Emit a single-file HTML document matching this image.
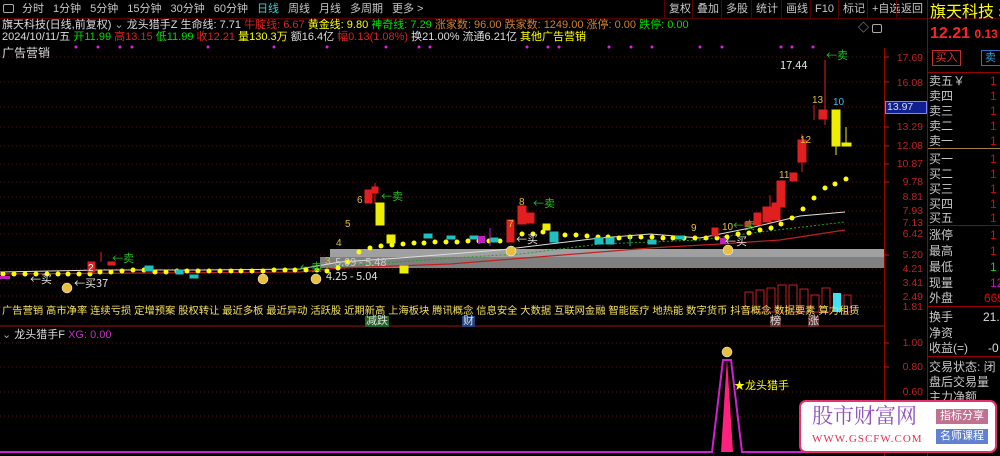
<!DOCTYPE html>
<html><head><meta charset="utf-8"><style>
*{margin:0;padding:0;box-sizing:border-box}
body{width:1000px;height:456px;background:#000;overflow:hidden;position:relative;font-family:"Liberation Sans","Noto Sans CJK SC",sans-serif;font-size:11px;color:#c8c8c8}
.a{position:absolute;white-space:nowrap;line-height:1}
.tb span{margin-right:9px}
.btn{position:absolute;top:0;height:18px;line-height:18px;font-size:11px;color:#c8c8c8;border-left:1px solid #5a0000;padding:0 4px}
.ax{position:absolute;left:885px;width:38px;text-align:right;color:#c02020;font-size:10.5px;line-height:1}
.rp{position:absolute;left:929px;font-size:12px;color:#c8c8c8;line-height:1}
.rv{position:absolute;left:990px;font-size:12px;color:#e00;line-height:1}
</style></head><body>
<div class="a" style="left:0;top:0;width:1000px;height:19px;background:#000;border-bottom:1px solid #500"></div>
<div class="a" style="left:3px;top:4px;width:11px;height:9px;border:1px solid #aaa;border-radius:2px"></div>
<div class="a tb" style="left:22px;top:4px;font-size:11px;color:#c8c8c8"><span>分时</span><span>1分钟</span><span>5分钟</span><span>15分钟</span><span>30分钟</span><span>60分钟</span><span style="color:#4cc">日线</span><span>周线</span><span>月线</span><span>多周期</span><span>更多 &gt;</span></div>
<div class="btn" style="left:664px">复权</div><div class="btn" style="left:692px">叠加</div><div class="btn" style="left:721px">多股</div><div class="btn" style="left:751px">统计</div><div class="btn" style="left:781px">画线</div><div class="btn" style="left:810px">F10</div><div class="btn" style="left:838px">标记</div><div class="btn" style="left:867px">+自选</div><div class="btn" style="left:896px">返回</div>
<div class="a" style="left:927px;top:0;width:1px;height:456px;background:#900"></div>
<div class="a" style="left:930px;top:5px;font-size:16px;color:#ff0">旗天科技 <span style="font-size:13px;color:#ddd">30</span></div>
<div class="a" style="left:930px;top:26px;font-size:16px;color:#f22;font-weight:bold">12.21 <span style="font-size:12px">0.13</span></div>
<div class="a" style="left:932px;top:50px;width:29px;height:16px;border:1px solid #c03030;color:#e03030;font-size:11px;text-align:center;line-height:14px">买入</div>
<div class="a" style="left:981px;top:50px;width:25px;height:16px;border:1px solid #3070c0;color:#30a0e0;font-size:11px;padding-left:3px;line-height:14px">卖</div>
<div class="a" style="left:928px;top:72px;width:72px;height:1px;background:#900"></div>
<div class="rp" style="top:75px">卖五￥</div><div class="rp" style="top:90px">卖四</div><div class="rp" style="top:105px">卖三</div><div class="rp" style="top:120px">卖二</div><div class="rp" style="top:135px">卖一</div>
<div class="rv" style="top:75px">1</div><div class="rv" style="top:90px">1</div><div class="rv" style="top:105px">1</div><div class="rv" style="top:120px">1</div><div class="rv" style="top:135px">1</div>
<div class="a" style="left:928px;top:148px;width:72px;height:1px;background:#a08040"></div>
<div class="rp" style="top:153px">买一</div><div class="rp" style="top:168px">买二</div><div class="rp" style="top:183px">买三</div><div class="rp" style="top:198px">买四</div><div class="rp" style="top:212px">买五</div>
<div class="rv" style="top:153px">1</div><div class="rv" style="top:168px">1</div><div class="rv" style="top:183px">1</div><div class="rv" style="top:198px">1</div><div class="rv" style="top:212px">1</div>
<div class="a" style="left:928px;top:225px;width:72px;height:1px;background:#900"></div>
<div class="rp" style="top:229px">涨停</div><div class="rp" style="top:245px">最高</div><div class="rp" style="top:261px">最低</div><div class="rp" style="top:277px">现量</div><div class="rp" style="top:292px">外盘</div>
<div class="rv" style="top:229px">1</div><div class="rv" style="top:245px">1</div><div class="rv" style="top:261px;color:#0d0">1</div><div class="rv" style="top:277px;color:#d0d">12</div><div class="rv" style="top:292px;left:984px">669</div>
<div class="a" style="left:928px;top:306px;width:72px;height:1px;background:#900"></div>
<div class="rp" style="top:311px">换手</div><div class="rv" style="top:311px;left:983px;color:#ddd">21.</div>
<div class="rp" style="top:327px">净资</div>
<div class="rp" style="top:342px">收益(=)</div><div class="rv" style="top:342px;left:988px;color:#ddd">-0</div>
<div class="a" style="left:928px;top:356px;width:72px;height:1px;background:#900"></div>
<div class="rp" style="top:361px">交易状态: 闭</div><div class="rp" style="top:376px">盘后交易量</div><div class="rp" style="top:391px">主力净额</div>
<div class="a" style="left:2px;top:20px;font-size:11px"><span style="color:#ddd">旗天科技(日线,前复权)</span> <span style="color:#aaa">⌄</span> <span style="color:#ddd">龙头猎手Z 生命线: 7.71</span> <span style="color:#e02020">牛腚线: 6.67</span> <span style="color:#ff0">黄金线: 9.80</span> <span style="color:#0d0">神奇线: 7.29</span> <span style="color:#d08030">涨家数: 96.00</span> <span style="color:#d08030">跌家数: 1249.00</span> <span style="color:#d08030">涨停: 0.00</span> <span style="color:#0d0">跌停: 0.00</span></div>
<div class="a" style="left:2px;top:32px;font-size:11px;color:#ddd">2024/10/11/五 <span style="color:#0d0">开11.99</span> <span style="color:#e02020">高13.15</span> <span style="color:#0d0">低11.99</span> <span style="color:#e02020">收12.21</span> <span style="color:#ff0">量130.3万</span> 额16.4亿 <span style="color:#e02020">幅0.13(1.08%)</span> 换21.00% 流通6.21亿 <span style="color:#ff0">其他广告营销</span></div>
<div class="a" style="left:2px;top:47px;font-size:12px;color:#ddd">广告营销</div>
<div class="a" style="left:858px;top:23px;color:#aaa">◇</div>
<div class="a" style="left:872px;top:24px;width:10px;height:9px;border:1px solid #aaa;border-radius:2px"></div>
<div class="a" style="left:884px;top:48px;width:1px;height:408px;background:#900"></div>
<div class="ax" style="top:53px">17.69</div><div class="ax" style="top:78px">16.08</div>
<div class="a" style="left:885px;top:101px;width:42px;height:13px;background:#102090;border:1px solid #8080ff;color:#ddd;font-size:10.5px;padding-left:1px">13.97</div>
<div class="ax" style="top:122px">13.29</div><div class="ax" style="top:141px">12.08</div><div class="ax" style="top:159px">10.87</div><div class="ax" style="top:177px">9.78</div><div class="ax" style="top:192px">8.81</div><div class="ax" style="top:206px">7.93</div><div class="ax" style="top:218px">7.13</div><div class="ax" style="top:229px">6.42</div><div class="ax" style="top:250px">5.20</div><div class="ax" style="top:264px">4.21</div><div class="ax" style="top:278px">3.41</div><div class="ax" style="top:292px">2.49</div><div class="ax" style="top:302px">1.81</div>
<div class="ax" style="top:338px">1.00</div><div class="ax" style="top:362px">0.80</div><div class="ax" style="top:387px">0.60</div>
<svg class="a" style="left:0;top:0" width="927" height="456">
<g stroke="#501010" stroke-dasharray="1 3">
<line x1="0" y1="57" x2="884" y2="57"/><line x1="0" y1="82" x2="884" y2="82"/><line x1="0" y1="107" x2="884" y2="107"/><line x1="0" y1="127" x2="884" y2="127"/><line x1="0" y1="146" x2="884" y2="146"/><line x1="0" y1="164" x2="884" y2="164"/><line x1="0" y1="182" x2="884" y2="182"/><line x1="0" y1="197" x2="884" y2="197"/><line x1="0" y1="211" x2="884" y2="211"/><line x1="0" y1="224" x2="884" y2="224"/><line x1="0" y1="234" x2="884" y2="234"/><line x1="0" y1="255" x2="884" y2="255"/><line x1="0" y1="269" x2="884" y2="269"/><line x1="0" y1="283" x2="884" y2="283"/><line x1="0" y1="296" x2="884" y2="296"/><line x1="0" y1="307" x2="884" y2="307"/>
<line x1="0" y1="343" x2="884" y2="343"/><line x1="0" y1="367" x2="884" y2="367"/><line x1="0" y1="392" x2="884" y2="392"/><line x1="0" y1="416" x2="884" y2="416"/>
</g>
<g stroke="#c02020"><line x1="884" y1="57" x2="889" y2="57"/><line x1="884" y1="82" x2="889" y2="82"/><line x1="884" y1="127" x2="889" y2="127"/><line x1="884" y1="146" x2="889" y2="146"/><line x1="884" y1="164" x2="889" y2="164"/><line x1="884" y1="182" x2="889" y2="182"/><line x1="884" y1="255" x2="889" y2="255"/><line x1="884" y1="343" x2="889" y2="343"/><line x1="884" y1="367" x2="889" y2="367"/></g>
<g fill="#e020e0"><circle cx="76" cy="47" r="1.5"/><circle cx="98" cy="47" r="1.5"/><circle cx="120" cy="47" r="1.5"/><circle cx="132" cy="47" r="1.5"/><circle cx="208" cy="47" r="1.5"/><circle cx="274" cy="47" r="1.5"/><circle cx="327" cy="47" r="1.5"/><circle cx="386" cy="47" r="1.5"/><circle cx="419" cy="47" r="1.5"/><circle cx="430" cy="47" r="1.5"/><circle cx="527" cy="47" r="1.5"/><circle cx="548" cy="47" r="1.5"/><circle cx="559" cy="47" r="1.5"/><circle cx="609" cy="47" r="1.5"/><circle cx="631" cy="47" r="1.5"/><circle cx="652" cy="47" r="1.5"/><circle cx="700" cy="47" r="1.5"/><circle cx="722" cy="47" r="1.5"/><circle cx="781" cy="47" r="1.5"/><circle cx="792" cy="47" r="1.5"/><circle cx="813" cy="47" r="1.5"/></g>
<rect x="330" y="249" width="554" height="8" fill="#a0a0a0"/>
<rect x="320" y="257" width="564" height="11" fill="#808080"/>
<polyline points="0,272 100,270 200,270 300,269 340,262 400,258 500,250 600,238 650,234 700,238 750,228 800,216 845,212" fill="none" stroke="#ddd" stroke-width="1"/>
<polyline points="0,274 300,272 340,268 450,264 550,256 650,248 720,244 780,240 845,230" fill="none" stroke="#c02020" stroke-width="1.2"/>
<polyline points="320,268 450,258 520,254 600,244 700,240 760,232 845,222" fill="none" stroke="#20a020" stroke-dasharray="2 2"/>
<g fill="#ff0">
<circle cx="3" cy="274" r="2.5"/><circle cx="14" cy="274" r="2.5"/><circle cx="25" cy="274" r="2.5"/><circle cx="36" cy="274" r="2.5"/><circle cx="47" cy="274" r="2.5"/><circle cx="58" cy="274" r="2.5"/><circle cx="68" cy="274" r="2.5"/><circle cx="79" cy="274" r="2.5"/><circle cx="90" cy="274" r="2.5"/><circle cx="100" cy="272" r="2.5"/><circle cx="111" cy="272" r="2.5"/><circle cx="122" cy="271" r="2.5"/><circle cx="133" cy="270" r="2.5"/><circle cx="144" cy="270" r="2.5"/><circle cx="155" cy="272" r="2.5"/><circle cx="166" cy="272" r="2.5"/><circle cx="177" cy="271" r="2.5"/><circle cx="187" cy="271" r="2.5"/><circle cx="198" cy="271" r="2.5"/><circle cx="209" cy="271" r="2.5"/><circle cx="220" cy="271" r="2.5"/><circle cx="231" cy="271" r="2.5"/><circle cx="241" cy="271" r="2.5"/><circle cx="252" cy="271" r="2.5"/><circle cx="263" cy="271" r="2.5"/><circle cx="274" cy="270" r="2.5"/><circle cx="285" cy="270" r="2.5"/><circle cx="295" cy="270" r="2.5"/><circle cx="306" cy="270" r="2.5"/><circle cx="317" cy="270" r="2.5"/><circle cx="327" cy="271" r="2.5"/><circle cx="338" cy="268" r="2.5"/><circle cx="348" cy="262" r="2.5"/><circle cx="359" cy="252" r="2.5"/><circle cx="370" cy="248" r="2.5"/><circle cx="381" cy="246" r="2.5"/><circle cx="392" cy="245" r="2.5"/><circle cx="403" cy="244" r="2.5"/><circle cx="414" cy="243" r="2.5"/><circle cx="424" cy="243" r="2.5"/><circle cx="435" cy="242" r="2.5"/><circle cx="446" cy="242" r="2.5"/><circle cx="457" cy="242" r="2.5"/><circle cx="468" cy="241" r="2.5"/><circle cx="479" cy="241" r="2.5"/><circle cx="489" cy="241" r="2.5"/><circle cx="500" cy="241" r="2.5"/><circle cx="511" cy="239" r="2.5"/><circle cx="522" cy="234" r="2.5"/><circle cx="533" cy="234" r="2.5"/><circle cx="543" cy="232" r="2.5"/><circle cx="554" cy="235" r="2.5"/><circle cx="565" cy="235" r="2.5"/><circle cx="576" cy="235" r="2.5"/><circle cx="587" cy="236" r="2.5"/><circle cx="598" cy="237" r="2.5"/><circle cx="608" cy="237" r="2.5"/><circle cx="619" cy="238" r="2.5"/><circle cx="630" cy="237" r="2.5"/><circle cx="641" cy="237" r="2.5"/><circle cx="652" cy="237" r="2.5"/><circle cx="663" cy="238" r="2.5"/><circle cx="673" cy="238" r="2.5"/><circle cx="684" cy="238" r="2.5"/><circle cx="695" cy="238" r="2.5"/><circle cx="706" cy="238" r="2.5"/><circle cx="717" cy="238" r="2.5"/><circle cx="727" cy="237" r="2.5"/><circle cx="738" cy="234" r="2.5"/><circle cx="749" cy="233" r="2.5"/><circle cx="760" cy="230" r="2.5"/><circle cx="771" cy="228" r="2.5"/><circle cx="781" cy="224" r="2.5"/><circle cx="792" cy="218" r="2.5"/><circle cx="803" cy="209" r="2.5"/><circle cx="814" cy="198" r="2.5"/><circle cx="825" cy="188" r="2.5"/><circle cx="835" cy="184" r="2.5"/><circle cx="846" cy="179" r="2.5"/>
</g>
<g stroke="#e02020" fill="#e02020">
<rect x="88" y="262" width="7" height="10"/><line x1="101" y1="252" x2="101" y2="262"/><rect x="108" y="262" width="7" height="3"/>
<rect x="365" y="190" width="7" height="13"/><rect x="372" y="187" width="6" height="6"/><line x1="375" y1="183" x2="375" y2="204"/>
<rect x="507" y="220" width="7" height="22"/><rect x="518" y="206" width="8" height="18"/><rect x="527" y="213" width="7" height="10"/>
<rect x="712" y="228" width="6" height="8"/><rect x="745" y="222" width="6" height="4"/><rect x="754" y="213" width="7" height="12"/><rect x="763" y="207" width="8" height="15"/><rect x="772" y="203" width="8" height="17"/><line x1="770" y1="195" x2="770" y2="215"/><line x1="780" y1="188" x2="780" y2="213"/><rect x="777" y="181" width="8" height="26"/><rect x="790" y="173" width="7" height="8"/><rect x="798" y="140" width="8" height="22"/><line x1="802" y1="134" x2="802" y2="172"/><rect x="819" y="110" width="8" height="9"/><line x1="814" y1="105" x2="814" y2="120"/><line x1="825" y1="60" x2="825" y2="125"/>
</g>
<g fill="#ee0" stroke="#ee0">
<rect x="376" y="203" width="8" height="22"/><rect x="387" y="235" width="8" height="8"/><rect x="832" y="110" width="8" height="36"/><line x1="836" y1="146" x2="836" y2="155"/><rect x="842" y="143" width="9" height="3"/><line x1="846" y1="127" x2="846" y2="146"/><rect x="543" y="224" width="7" height="6"/><rect x="400" y="266" width="8" height="7"/>
</g>
<g fill="#20c0c0" stroke="#20c0c0">
<rect x="424" y="234" width="8" height="4"/><rect x="447" y="236" width="8" height="3"/><rect x="470" y="236" width="8" height="3"/><rect x="490" y="238" width="8" height="4"/><rect x="550" y="232" width="8" height="10"/><rect x="595" y="238" width="8" height="6"/><rect x="606" y="238" width="8" height="6"/><line x1="630" y1="236" x2="630" y2="246"/><rect x="648" y="240" width="8" height="4"/><rect x="676" y="236" width="8" height="3"/><rect x="145" y="266" width="8" height="5"/><rect x="176" y="270" width="7" height="4"/><rect x="190" y="275" width="8" height="3"/>
</g>
<g fill="#c020c0"><rect x="478" y="236" width="7" height="7"/><rect x="0" y="276" width="10" height="3"/><rect x="720" y="238" width="6" height="6"/><line x1="490" y1="228" x2="490" y2="246" stroke="#c020c0"/></g>
<g fill="none" stroke="#c02020"><rect x="745" y="292" width="8" height="20"/><rect x="756" y="290" width="8" height="22"/><rect x="767" y="288" width="8" height="24"/><rect x="778" y="285" width="8" height="27"/><rect x="789" y="285" width="8" height="27"/><rect x="800" y="289" width="8" height="23"/><rect x="811" y="295" width="8" height="17"/><rect x="822" y="288" width="8" height="24"/><rect x="844" y="295" width="7" height="17"/></g>
<rect x="833" y="293" width="8" height="19" fill="#40e0f0"/>
<g font-size="10" fill="#e0c040" font-family="Liberation Sans"><text x="88" y="271" fill="#fff">2</text><text x="336" y="246">4</text><text x="345" y="227">5</text><text x="357" y="203">6</text><text x="519" y="205">8</text><text x="508" y="227">7</text><text x="325" y="264">3</text><text x="691" y="231">9</text><text x="722" y="230">10</text><text x="779" y="178">11</text><text x="800" y="143">12</text><text x="812" y="103">13</text><text x="833" y="105" fill="#40c0e0">10</text></g>
<g font-size="11" fill="#20c020" font-family="Noto Sans CJK SC"><text x="112" y="262">←卖</text><text x="381" y="200">←卖</text><text x="533" y="207">←卖</text><text x="826" y="59">←卖</text><text x="300" y="271">←卖</text><text x="733" y="229">←卖</text></g>
<g font-size="11" fill="#e0e0e0" font-family="Noto Sans CJK SC"><text x="74" y="287">←买37</text><text x="30" y="283">←买</text><text x="326" y="280">4.25 - 5.04</text><text x="335" y="266" fill="#ccc">5.09 - 5.48</text><text x="516" y="243">←买</text><text x="780" y="69">17.44</text><text x="725" y="245">←买</text></g>
<g fill="#e8c040" stroke="#fff" stroke-width="0.5"><circle cx="67" cy="288" r="5"/><circle cx="263" cy="279" r="5"/><circle cx="316" cy="279" r="5"/><circle cx="511" cy="251" r="5"/><circle cx="728" cy="250" r="5"/><circle cx="727" cy="352" r="5"/></g>
<line x1="0" y1="326" x2="884" y2="326" stroke="#a01010"/>
<polyline points="0,452 712,452 723,360 731,360 742,452 884,452" fill="none" stroke="#d020d0" stroke-width="2"/>
<polygon points="721,452 727,358 733,452" fill="#ff2080"/>
</svg>
<div class="a" style="left:2px;top:307px;font-size:10.3px;color:#f0e060">广告营销 高市净率 连续亏损 定增预案 股权转让 最近多板 最近异动 活跃股 近期新高 上海板块 腾讯概念 信息安全 大数据 互联网金融 智能医疗 地热能 数字货币 抖音概念 数据要素 算力租赁</div>
<div class="a" style="left:365px;top:316px;font-size:11px;color:#e0e0e0;background:#206020;padding:0 1px">减跌</div>
<div class="a" style="left:462px;top:316px;font-size:11px;color:#e0e0e0;background:#204080;padding:0 1px">财</div>
<div class="a" style="left:770px;top:316px;font-size:11px;color:#ddd;background:#603030">榜</div>
<div class="a" style="left:808px;top:316px;font-size:11px;color:#ddd;background:#603030">涨</div>
<div class="a" style="left:2px;top:330px;font-size:11px;color:#ddd"><span style="color:#aaa">⌄</span> 龙头猎手F <span style="color:#c030c0">XG: 0.00</span></div>
<div class="a" style="left:734px;top:381px;font-size:11px;color:#ff0">★龙头猎手</div>
<div class="a" style="left:799px;top:400px;width:198px;height:53px;background:#fff;border:2px solid #e83070;border-radius:7px"></div>
<div class="a" style="left:812px;top:405px;font-size:21px;color:#9050c0;font-family:'Noto Serif CJK SC',serif">股市财富网</div>
<div class="a" style="left:812px;top:434px;font-size:11px;color:#e03050;font-family:'Liberation Serif',serif;letter-spacing:1px">WWW.GSCFW.COM</div>
<div class="a" style="left:936px;top:409px;width:52px;height:15px;background:#c07090;color:#fff;font-size:11px;text-align:center;line-height:15px">指标分享</div>
<div class="a" style="left:936px;top:429px;width:52px;height:15px;background:#6080d0;color:#fff;font-size:11px;text-align:center;line-height:15px">名师课程</div>
</body></html>
